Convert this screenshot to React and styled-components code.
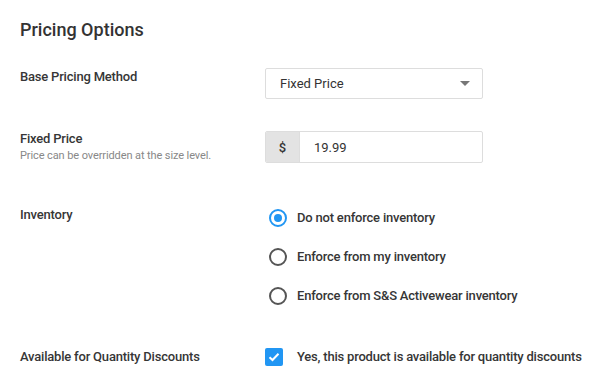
import styled, { createGlobalStyle } from 'styled-components';

const GlobalStyle = createGlobalStyle`
	body {
		margin: 0;
		background: #fff;
		font-family: Roboto, "Liberation Sans", sans-serif;
		color: #333;
	}
`;

const Page = styled.div`
	padding: 18px 20px 0 20px;
`;

const Title = styled.h2`
	margin: 0 0 26px 0;
	font-size: 18px;
	font-weight: 500;
	line-height: 24px;
	color: #333;
`;

const Row = styled.div`
	display: grid;
	grid-template-columns: 245px 218px;
	align-items: start;
	margin-bottom: ${(p) => p.$gap || 0}px;
`;

const LabelBlock = styled.div`
	display: flex;
	flex-direction: column;
	padding-top: ${(p) => p.$top || 0}px;
`;

const Label = styled.span`
	font-size: 13px;
	font-weight: 500;
	letter-spacing: -0.2px;
	line-height: 16px;
	color: #363636;
`;

const Hint = styled.span`
	font-size: 11px;
	letter-spacing: -0.1px;
	line-height: 14px;
	color: #888;
	margin-top: 2px;
`;

const Select = styled.div`
	display: flex;
	align-items: center;
	justify-content: space-between;
	box-sizing: border-box;
	height: 31px;
	padding: 0 12px 0 14px;
	border: 1px solid #ddd;
	border-radius: 2px;
	font-size: 13px;
	color: #333;
`;

const Caret = styled.span`
	width: 0;
	height: 0;
	border-left: 5px solid transparent;
	border-right: 5px solid transparent;
	border-top: 5px solid #777;
`;

const InputGroup = styled.div`
	display: flex;
	box-sizing: border-box;
	height: 32px;
	border: 1px solid #ddd;
	border-radius: 2px;
	overflow: hidden;
`;

const Prefix = styled.span`
	display: flex;
	align-items: center;
	justify-content: center;
	width: 33px;
	background: #e3e3e3;
	font-size: 13px;
	font-weight: 500;
	color: #333;
	border-right: 1px solid #ddd;
`;

const Value = styled.span`
	display: flex;
	align-items: center;
	padding-left: 14px;
	font-size: 13px;
	color: #333;
`;

const OptionList = styled.div`
	display: flex;
	flex-direction: column;
	gap: 19px;
	width: 345px;
	padding-top: 1px;
`;

const Option = styled.label`
	display: flex;
	align-items: center;
	gap: ${(p) => p.$gap || 10}px;
	font-size: 13px;
	font-weight: 500;
	letter-spacing: -0.2px;
	line-height: 20px;
	color: #363636;
	white-space: nowrap;
`;

const Radio = styled.span`
	flex-shrink: 0;
	box-sizing: border-box;
	width: 18px;
	height: 18px;
	margin-left: 4px;
	border-radius: 50%;
	border: 2px solid ${(p) => (p.$checked ? '#2196f3' : '#555')};
	display: flex;
	align-items: center;
	justify-content: center;
	&::after {
		content: '';
		width: 8px;
		height: 8px;
		border-radius: 50%;
		background: #2196f3;
		display: ${(p) => (p.$checked ? 'block' : 'none')};
	}
`;

const Checkbox = styled.span`
	flex-shrink: 0;
	display: flex;
	align-items: center;
	justify-content: center;
	width: 18px;
	height: 18px;
	border-radius: 2px;
	background: #2196f3;
`;

const options = [
	{ label: 'Do not enforce inventory', checked: true },
	{ label: 'Enforce from my inventory' },
	{ label: 'Enforce from S&S Activewear inventory' },
];

export default function App() {
	return (
		<Page>
			<GlobalStyle />
			<Title>Pricing Options</Title>

			<Row $gap={32}>
				<LabelBlock $top={1}>
					<Label>Base Pricing Method</Label>
				</LabelBlock>
				<Select>
					Fixed Price
					<Caret />
				</Select>
			</Row>

			<Row $gap={44}>
				<LabelBlock>
					<Label>Fixed Price</Label>
					<Hint>Price can be overridden at the size level.</Hint>
				</LabelBlock>
				<InputGroup>
					<Prefix>$</Prefix>
					<Value>19.99</Value>
				</InputGroup>
			</Row>

			<Row $gap={41}>
				<LabelBlock>
					<Label>Inventory</Label>
				</LabelBlock>
				<OptionList>
					{options.map((o) => (
						<Option key={o.label}>
							<Radio $checked={o.checked} />
							{o.label}
						</Option>
					))}
				</OptionList>
			</Row>

			<Row>
				<LabelBlock $top={2}>
					<Label>Available for Quantity Discounts</Label>
				</LabelBlock>
				<Option as="div" $gap={14}>
					<Checkbox>
						<svg width="12" height="10" viewBox="0 0 12 10">
							<path d="M1.5 5.2 L4.5 8 L10.5 1.8" fill="none" stroke="#fff" strokeWidth="2" />
						</svg>
					</Checkbox>
					Yes, this product is available for quantity discounts
				</Option>
			</Row>
		</Page>
	);
}
